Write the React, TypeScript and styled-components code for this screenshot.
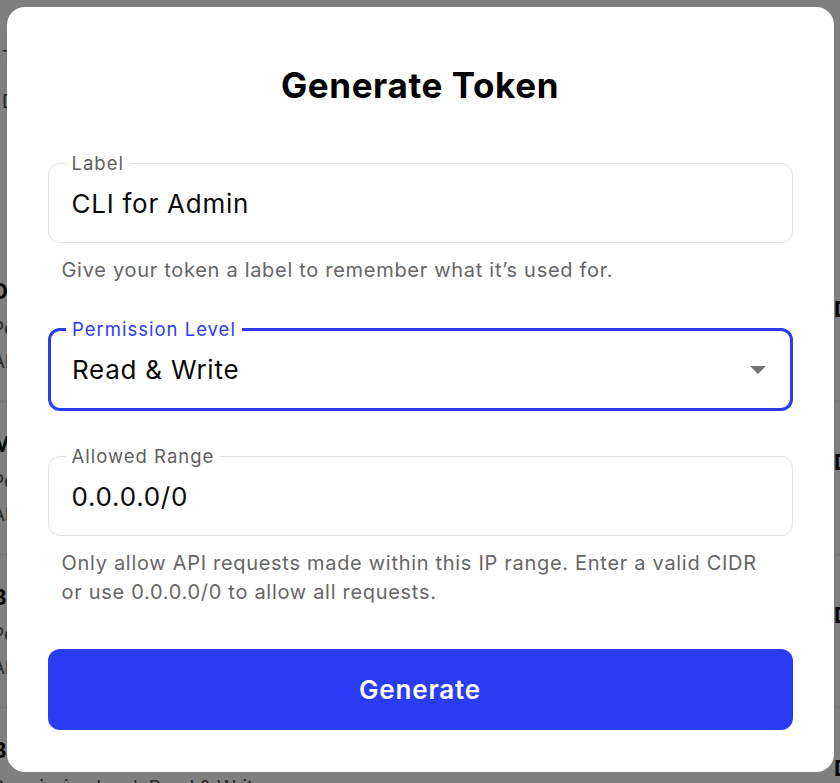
import styled, { createGlobalStyle } from "styled-components";
import { FC, ReactNode } from "react";

const GlobalStyle = createGlobalStyle`
  html, body {
    margin: 0;
    padding: 0;
    background: #ffffff;
    font-family: Inter, "Noto Sans", "Liberation Sans", sans-serif;
  }
  * {
    box-sizing: border-box;
  }
`;

const BLUE = "#2b3df4";

const tokens = [
  { name: "Deploy key", scope: "Read only", range: "10.0.0.0/8" },
  { name: "Monitoring", scope: "Read & Write", range: "0.0.0.0/0" },
  { name: "Build server", scope: "Read only", range: "192.168.0.0/16" },
  { name: "Backup job", scope: "Read & Write", range: "0.0.0.0/0" },
  { name: "Web hooks", scope: "Read only", range: "0.0.0.0/0" },
];

const OutlinedField: FC<{
  label: string;
  focused?: boolean;
  children: ReactNode;
}> = ({ label, focused = false, children }) => (
  <Fieldset $focused={focused}>
    <Legend $focused={focused}>{label}</Legend>
    <FieldBody>{children}</FieldBody>
  </Fieldset>
);

const App: FC = () => {
  return (
    <>
      <GlobalStyle />
      <Page aria-hidden>
        <PageIntro>
          <IntroLine>Tokens give programmatic access to your workspace.</IntroLine>
          <IntroLine>Do not share them with anyone you do not trust.</IntroLine>
        </PageIntro>
        {tokens.map((t) => (
          <TokenRow key={t.name}>
            <TokenInfo>
              <TokenName>{t.name}</TokenName>
              <TokenMeta>Permission level: {t.scope}</TokenMeta>
              <TokenMeta>Allowed range: {t.range}</TokenMeta>
            </TokenInfo>
            <TokenAction>Delete</TokenAction>
          </TokenRow>
        ))}
      </Page>

      <Backdrop>
        <Modal>
          <Title>Generate Token</Title>

          <FieldGroup>
            <OutlinedField label="Label">
              <Value>CLI for Admin</Value>
            </OutlinedField>
            <Helper>Give your token a label to remember what it’s used for.</Helper>
          </FieldGroup>

          <FieldGroup>
            <OutlinedField label="Permission Level" focused>
              <Value>Read &amp; Write</Value>
              <Caret viewBox="0 0 16 8" aria-hidden>
                <path d="M0 0h16L8 8z" fill="#757575" />
              </Caret>
            </OutlinedField>
          </FieldGroup>

          <FieldGroup>
            <OutlinedField label="Allowed Range">
              <Value>0.0.0.0/0</Value>
            </OutlinedField>
            <Helper>
              Only allow API requests made within this IP range. Enter a valid CIDR
              or use 0.0.0.0/0 to allow all requests.
            </Helper>
          </FieldGroup>

          <GenerateButton type="button">Generate</GenerateButton>
        </Modal>
      </Backdrop>
    </>
  );
};

export default App;

const Page = styled.div`
  height: 783px;
  overflow: hidden;
  color: #111;
`;

const PageIntro = styled.div`
  padding: 36px 0 0 2px;
  height: 250px;
`;

const IntroLine = styled.div`
  font-size: 19px;
  line-height: 44px;
  color: #444;
`;

const TokenRow = styled.div`
  display: flex;
  justify-content: space-between;
  align-items: flex-start;
  height: 153px;
  padding: 26px 0 0 0;
  border-bottom: 3px solid #eeeeee;
  margin-left: -8px;
`;

const TokenInfo = styled.div`
  display: flex;
  flex-direction: column;
`;

const TokenName = styled.div`
  font-size: 22px;
  font-weight: 700;
  line-height: 30px;
  margin-bottom: 6px;
`;

const TokenMeta = styled.div`
  font-size: 19px;
  line-height: 33px;
  color: #555;
`;

const TokenAction = styled.div`
  font-size: 22px;
  font-weight: 700;
  margin-top: 20px;
  margin-right: -60px;
  width: 66px;
`;

const Backdrop = styled.div`
  position: fixed;
  inset: 0;
  background: rgba(0, 0, 0, 0.5);
  display: flex;
  justify-content: center;
  align-items: flex-start;
  padding-top: 7px;
`;

const Modal = styled.div`
  width: 827px;
  background: #ffffff;
  border-radius: 18px;
  padding: 56px 41px 42px;
  display: flex;
  flex-direction: column;
`;

const Title = styled.h2`
  margin: 0 0 46px;
  text-align: center;
  font-size: 35px;
  line-height: 44px;
  font-weight: 700;
  color: #000;
  letter-spacing: 0.6px;
`;

const FieldGroup = styled.div`
  display: flex;
  flex-direction: column;
  margin-bottom: 35px;

  &:nth-of-type(1) {
    margin-bottom: 34px;
  }
  &:last-of-type {
    margin-bottom: 42px;
  }
`;

const Fieldset = styled.fieldset<{ $focused: boolean }>`
  margin: 0;
  min-width: 0;
  border: ${(p) => (p.$focused ? `3px solid ${BLUE}` : "1.5px solid #e4e4e4")};
  border-radius: 12px;
  padding: 0 ${(p) => (p.$focused ? "21.5px" : "23px")};
`;

const Legend = styled.legend<{ $focused: boolean }>`
  padding: 0 6px;
  margin-left: -6px;
  font-size: 18.5px;
  line-height: 20px;
  letter-spacing: 1px;
  color: ${(p) => (p.$focused ? BLUE : "#5f5f5f")};
`;

const FieldBody = styled.div`
  display: flex;
  align-items: center;
  justify-content: space-between;
  height: 40px;
  margin: 11px 0 18px;
`;

const Value = styled.span`
  font-size: 26px;
  line-height: 40px;
  letter-spacing: 0.75px;
  color: #0a0a0a;
`;

const Caret = styled.svg`
  width: 16px;
  height: 8px;
  margin-right: 2px;
`;

const Helper = styled.p`
  margin: 13px 0 0;
  padding: 0 14px;
  font-size: 20px;
  line-height: 29px;
  color: #666666;
  letter-spacing: 0.7px;
`;

const GenerateButton = styled.button`
  height: 81px;
  width: 100%;
  border: none;
  border-radius: 12px;
  background: ${BLUE};
  color: #ffffff;
  font-family: inherit;
  font-size: 26px;
  font-weight: 600;
  letter-spacing: 0.8px;
  cursor: pointer;
`;
